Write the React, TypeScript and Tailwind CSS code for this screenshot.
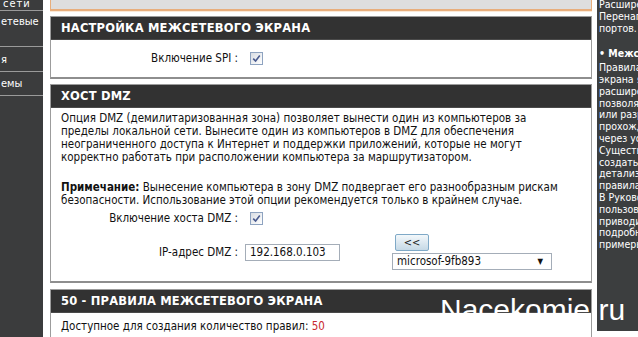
import type { ReactNode } from 'react';

const BODY_FONT = "font-['DejaVu_Sans_Condensed','DejaVu_Sans',sans-serif]";

function Check() {
  return (
    <span className="inline-flex w-[13px] h-[13px] items-center justify-center border border-[#8ea3c0] bg-gradient-to-br from-[#d9dde3] to-white">
      <svg viewBox="0 0 9 9" className="w-[9px] h-[9px]">
        <path d="M1.2 4.6 L3.6 7 L7.8 1.6" stroke="#4a5b8f" strokeWidth="1.6" fill="none" />
      </svg>
    </span>
  );
}

function Section({ title, children, className }: { title: string; children: ReactNode; className?: string }) {
  return (
    <div className="shrink-0 border border-[#9c9c9c] border-b-2 border-b-[#8e8e8e]">
      <div className="h-[23px] bg-[#323232] border-b border-[#4a4a4a] flex items-center pl-[10px] text-white font-bold text-[11.5px] tracking-[0.2px] font-['DejaVu_Sans',sans-serif] uppercase">
        {title}
      </div>
      <div className={className}>{children}</div>
    </div>
  );
}

const navItems = [
  { label: 'сети', cls: 'h-[13px] -mt-[3px] pl-[3px] tracking-[1px]' },
  { label: 'етевые', cls: 'h-[35px] pt-[4px] pl-[1px]' },
  { label: 'я', cls: 'h-[24px] pt-[6px] pl-[1px]' },
  { label: 'емы', cls: 'h-[23px] pt-[5px] pl-[1px]' },
];

const helpLines = ['Расширенная', 'Перенаправление', 'портов.'];

const helpLines2 = [
  'Правила межсетевого',
  'экрана являются',
  'расширенной функцией,',
  'позволяющей запрещать',
  'или разрешать',
  'прохождение трафика',
  'через устройство.',
  'Существует возможность',
  'создать',
  'детализированные',
  'правила.',
  'В Руководстве',
  'пользователя',
  'приводится',
  'подробное описание и',
  'примеры.',
];

export default function App() {
  return (
    <div className={`relative w-[638px] h-[337px] overflow-hidden bg-white flex items-start text-[11.5px] leading-[13px] text-[#111] ${BODY_FONT}`}>
      <nav className="w-[43px] h-[337px] shrink-0 bg-[#3b3c3d] text-white text-[11px] overflow-hidden">
        {navItems.map((n) => (
          <div key={n.label} className="border-b border-[#9a9a9a] overflow-hidden">
            <div className={`${n.cls} whitespace-nowrap`}>{n.label}</div>
          </div>
        ))}
      </nav>

      <main className="ml-[7px] w-[542px] shrink-0 flex flex-col">
        <div className="shrink-0 h-[11px] bg-[#dedede] border-x border-b-2 border-[#e8ae7c] shadow-[0_1px_0_#fbe9d7]" />

        <div className="mt-[5px] shrink-0">
          <Section title="Настройка межсетевого экрана" className="h-[37px] flex items-center">
            <span className="w-[187px] text-right">Включение SPI :</span>
            <span className="ml-[12px] flex"><Check /></span>
          </Section>
        </div>

        <div className="mt-[5px] shrink-0">
          <Section title="Хост DMZ" className="h-[173px] pl-[10px] pt-[4px]">
            <p>
              Опция DMZ (демилитаризованная зона) позволяет вынести один из компьютеров за
              <br />
              пределы локальной сети. Вынесите один из компьютеров в DMZ для обеспечения
              <br />
              неограниченного доступа к Интернет и поддержки приложений, которые не могут
              <br />
              корректно работать при расположении компьютера за маршрутизатором.
            </p>
            <p className="mt-[17px]">
              <b>Примечание:</b> Вынесение компьютера в зону DMZ подвергает его разнообразным рискам
              <br />
              безопасности. Использование этой опции рекомендуется только в крайнем случае.
            </p>
            <div className="mt-[4px] -ml-[10px] flex items-center h-[14px]">
              <span className="w-[187px] text-right">Включение хоста DMZ :</span>
              <span className="ml-[12px] flex"><Check /></span>
            </div>
            <div className="mt-[9px] -ml-[10px] flex items-center">
              <span className="w-[187px] text-right">IP-адрес DMZ :</span>
              <span className="ml-[7px] w-[95px] h-[17px] border border-[#a4adb8] flex items-center pl-[4px]">192.168.0.103</span>
              <div className="ml-[52px] flex flex-col">
                <button className="ml-[3px] w-[34px] h-[17px] rounded-[2px] border border-[#7fa9c7] bg-gradient-to-b from-[#f3f8fb] to-[#c6d9e6] text-[11px] leading-none text-[#222]">
                  &lt;&lt;
                </button>
                <div className="mt-[2px] w-[160px] h-[17px] border border-[#a4adb8] flex items-center justify-between pl-[4px] pr-[8px]">
                  <span>microsof-9fb893</span>
                  <span className="text-[8px] leading-none">▼</span>
                </div>
              </div>
            </div>
          </Section>
        </div>

        <div className="mt-[6px] shrink-0">
          <Section title="50 - Правила межсетевого экрана" className="h-[40px] pl-[10px] pt-[7px]">
            Доступное для создания количество правил: <span className="text-[#c8282d]">50</span>
          </Section>
        </div>
      </main>

      <aside className="ml-[5px] w-[41px] h-[331px] shrink-0 bg-[#3c3e3f] text-white text-[10.5px] leading-[11.8px] overflow-hidden pl-[2px]">
        <div className="-mt-[1px]">
          {helpLines.map((l) => (
            <div key={l} className="whitespace-nowrap">{l}</div>
          ))}
        </div>
        <div className="mt-[14px] whitespace-nowrap font-bold">• Межсетевой экран</div>
        <div className="mt-[2px]">
          {helpLines2.map((l) => (
            <div key={l} className="whitespace-nowrap">{l}</div>
          ))}
        </div>
      </aside>

      <div className="absolute left-[440px] top-[292px] text-white text-[30px] leading-[36px] font-['Liberation_Sans',Arial,sans-serif] pointer-events-none whitespace-nowrap">
        Nacekomie.ru
      </div>
    </div>
  );
}
